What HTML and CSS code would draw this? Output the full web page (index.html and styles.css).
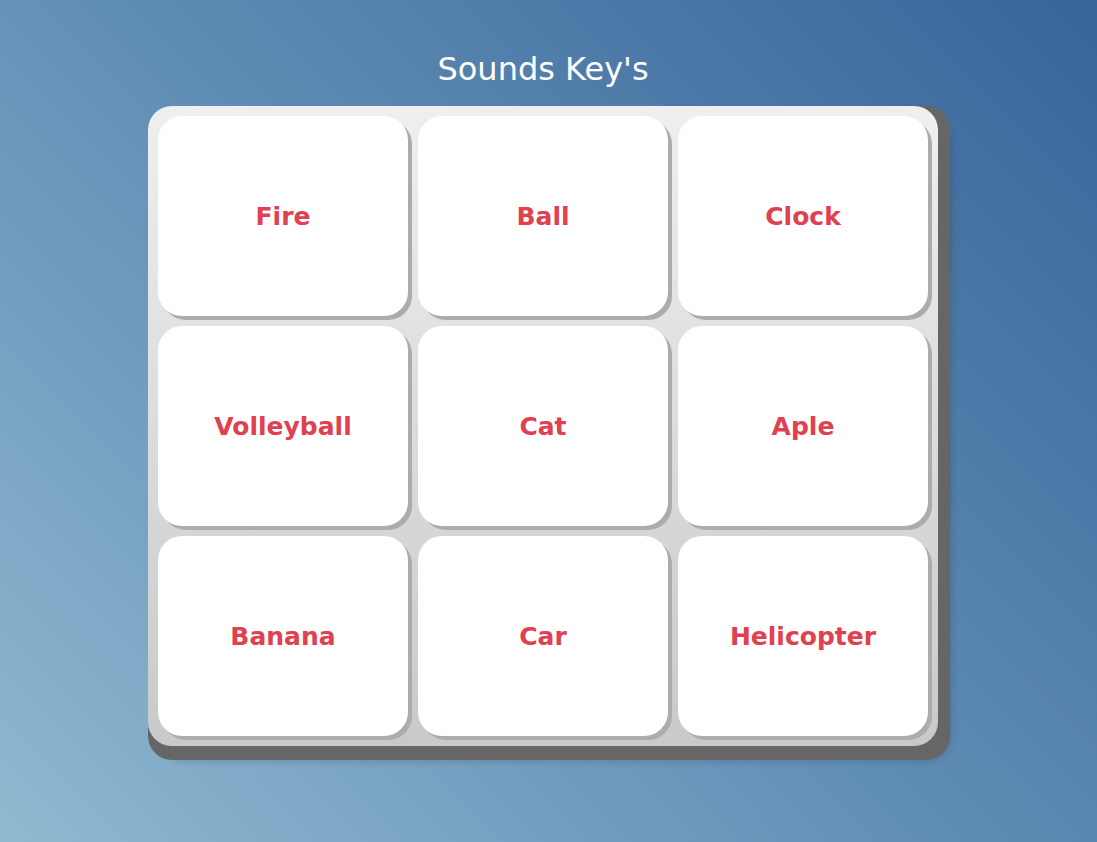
FILE: index.html
```html
<!DOCTYPE html>
<html>
<head>
<meta charset="utf-8">
<link rel="stylesheet" href="styles.css">
</head>
<body>
<main class="page">
  <h1 class="title">Sounds Key's</h1>
  <div class="board">
    <button class="key">Fire</button>
    <button class="key">Ball</button>
    <button class="key">Clock</button>
    <button class="key">Volleyball</button>
    <button class="key">Cat</button>
    <button class="key">Aple</button>
    <button class="key">Banana</button>
    <button class="key">Car</button>
    <button class="key">Helicopter</button>
  </div>
</main>
</body>
</html>
```
FILE: styles.css
```css
html, body {
  margin: 0;
  height: 100%;
}
body {
  background: linear-gradient(225deg, #386499 0%, #5f8cb4 50%, #90b8d0 100%);
  font-family: "DejaVu Sans", "Noto Sans", sans-serif;
}
.page {
  display: flex;
  flex-direction: column;
  align-items: center;
  padding: 50px 11px 0 0;
}
.title {
  margin: 0 0 18px 0;
  color: #ffffff;
  font-size: 32px;
  font-weight: 500;
  line-height: 38px;
}
.board {
  display: grid;
  grid-template-columns: repeat(3, 250px);
  grid-template-rows: repeat(3, 200px);
  gap: 10px;
  padding: 10px;
  border-radius: 24px;
  background: linear-gradient(180deg, #efefef 0%, #c9c9c9 100%);
  box-shadow:
    12px 0 0 #666666,
    0 14px 0 #666666,
    12px 14px 0 #666666,
    12px 14px 8px rgba(0,0,0,0.2);
}
.key {
  border: none;
  border-radius: 24px;
  background: #ffffff;
  box-shadow: 4px 4px 0 #acacac;
  color: #e0404f;
  font-family: "DejaVu Sans", "Noto Sans", sans-serif;
  font-size: 25px;
  font-weight: 600;
  cursor: pointer;
}
```
